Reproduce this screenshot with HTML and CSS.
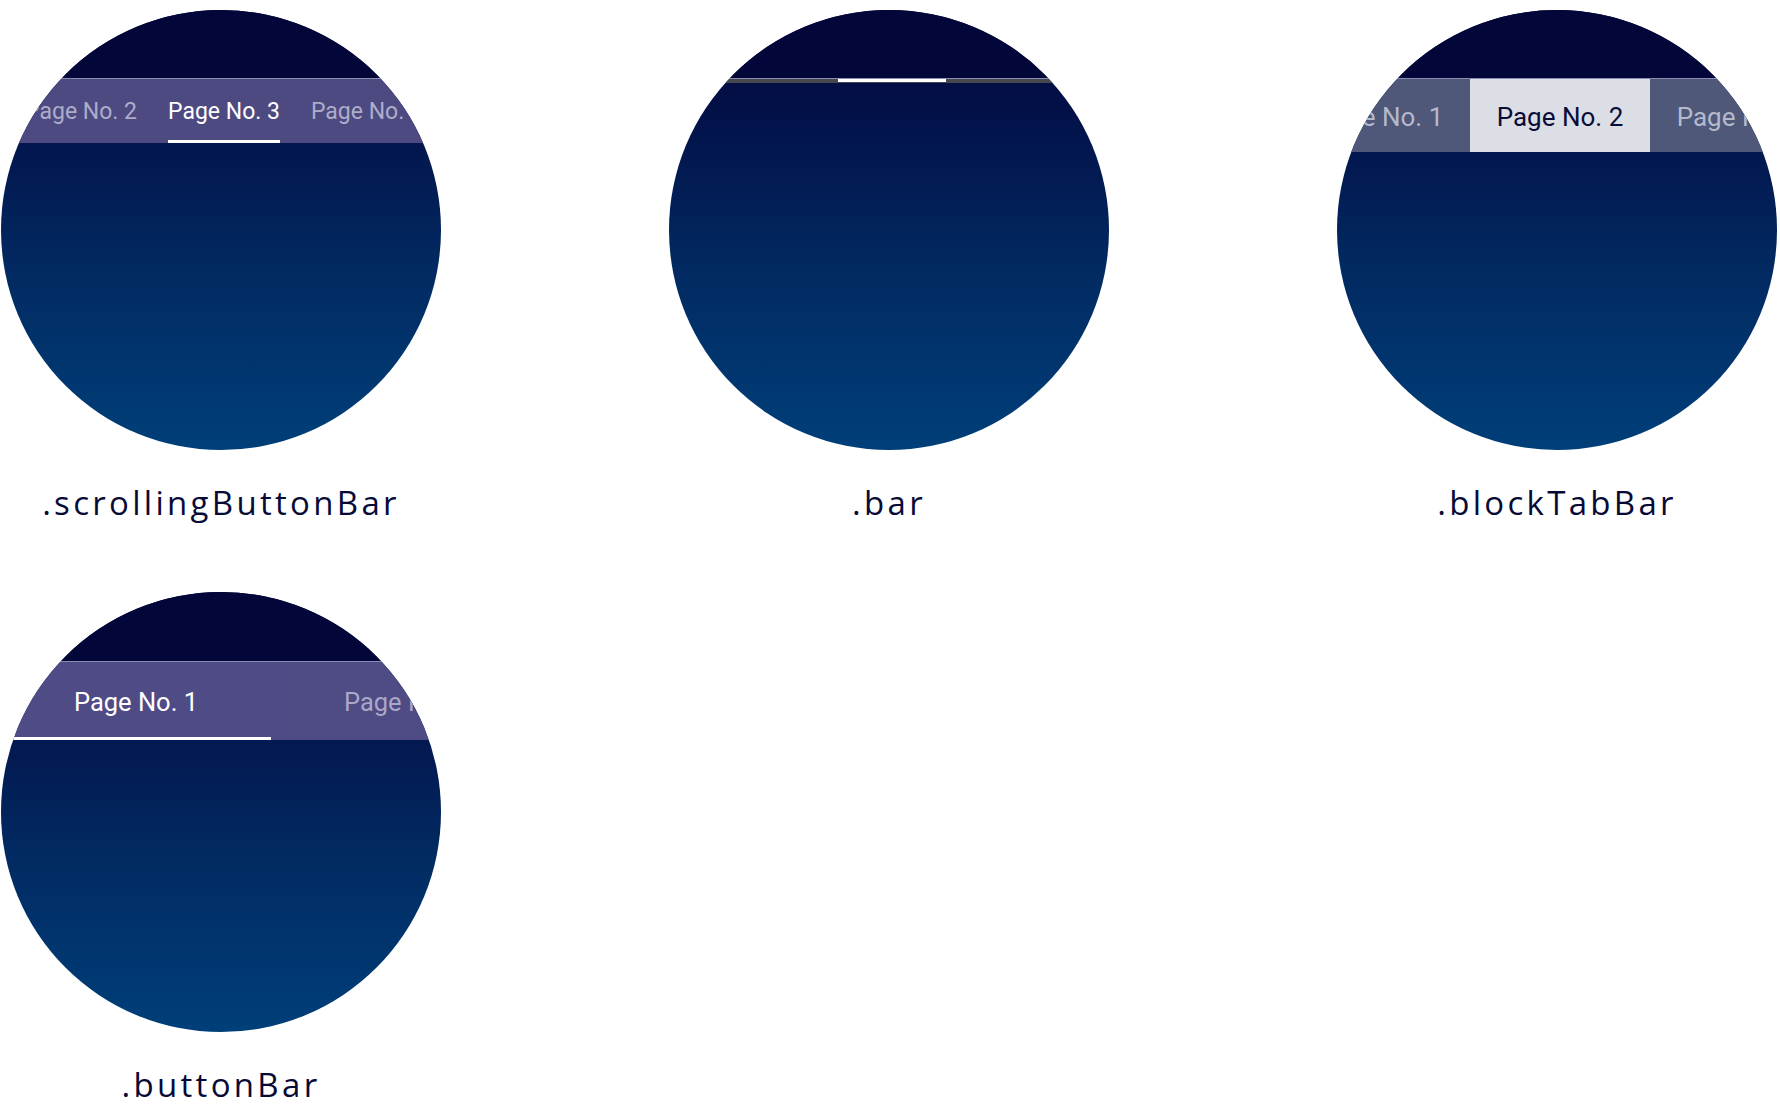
FILE: index.html
```html
<!DOCTYPE html>
<html>
<head>
<meta charset="utf-8">
<link rel="stylesheet" href="styles.css">
</head>
<body>
<div class="grid">
  <div class="cell">
    <div class="circle">
      <div class="nav"></div>
      <div class="sep"></div>
      <div class="scroll-bar">
        <span class="sitem">Page No. 1</span>
        <span class="sitem">Page No. 2</span>
        <span class="sitem active">Page No. 3</span>
        <span class="sitem">Page No. 4</span>
        <span class="sitem">Page No. 5</span>
      </div>
    </div>
    <div class="label">.scrollingButtonBar</div>
  </div>

  <div class="cell">
    <div class="circle">
      <div class="nav"></div>
      <div class="sep"></div>
      <div class="track"><div class="indicator"></div></div>
    </div>
    <div class="label">.bar</div>
  </div>

  <div class="cell">
    <div class="circle">
      <div class="nav"></div>
      <div class="sep"></div>
      <div class="block-bar">
        <span class="bitem">Page No. 0</span>
        <span class="bitem">Page No. 1</span>
        <span class="bitem active">Page No. 2</span>
        <span class="bitem">Page No. 3</span>
        <span class="bitem">Page No. 4</span>
      </div>
    </div>
    <div class="label">.blockTabBar</div>
  </div>

  <div class="cell">
    <div class="circle">
      <div class="nav nav-tall"></div>
      <div class="sep"></div>
      <div class="button-bar">
        <span class="btn active">Page No. 1</span>
        <span class="btn">Page No. 2</span>
      </div>
    </div>
    <div class="label">.buttonBar</div>
  </div>
</div>
</body>
</html>
```

FILE: styles.css
```css
html, body {
  margin: 0;
  padding: 0;
  background: #ffffff;
}
body {
  padding: 10px 0 0 1px;
}
.grid {
  display: grid;
  grid-template-columns: 440px 440px 440px;
  column-gap: 228px;
  row-gap: 68px;
}
.cell {
  display: flex;
  flex-direction: column;
  align-items: center;
}
.circle {
  width: 440px;
  height: 440px;
  border-radius: 50%;
  overflow: hidden;
  background: linear-gradient(to bottom, #020538 0%, #03124a 25%, #022a62 60%, #003f79 100%);
  display: flex;
  flex-direction: column;
}
.nav {
  height: 68px;
  flex: none;
  background: #020638;
}
.nav-tall {
  height: 69px;
}
.sep {
  height: 1px;
  flex: none;
  background: #8a8db3;
}
.scroll-bar {
  height: 64px;
  flex: none;
  background: #4d4a82;
  display: flex;
  justify-content: center;
  gap: 31px;
  font-family: Roboto, "Liberation Sans", sans-serif;
  font-size: 23px;
  white-space: nowrap;
  padding-left: 6px;
}
.sitem {
  color: rgba(200, 200, 222, 0.8);
  line-height: 61px;
  padding-top: 2px;
  height: 59px;
  border-bottom: 3px solid transparent;
}
.sitem.active {
  color: #ffffff;
  border-bottom-color: #ffffff;
}
.track {
  height: 4px;
  flex: none;
  background: #46474f;
  display: flex;
  justify-content: center;
}
.indicator {
  width: 108px;
  height: 3px;
  margin-left: 6px;
  background: #ffffff;
}
.block-bar {
  height: 73px;
  flex: none;
  background: #4f5878;
  display: flex;
  justify-content: center;
  font-family: Roboto, "Liberation Sans", sans-serif;
  font-size: 26px;
  white-space: nowrap;
  padding-left: 6px;
}
.bitem {
  flex: none;
  width: 180px;
  text-align: center;
  line-height: 73px;
  padding-top: 2px;
  height: 71px;
  color: rgba(200, 204, 222, 0.85);
}
.bitem.active {
  background: #dcdee6;
  color: #0a0c38;
}
.button-bar {
  height: 78px;
  flex: none;
  background: linear-gradient(to right, #4f4b86, #4e4b85);
  display: flex;
  font-family: Roboto, "Liberation Sans", sans-serif;
  font-size: 25.5px;
  white-space: nowrap;
}
.btn {
  flex: none;
  width: 270px;
  text-align: center;
  line-height: 75px;
  padding-top: 3px;
  height: 72px;
  color: rgba(200, 200, 222, 0.75);
  border-bottom: 3px solid transparent;
}
.btn.active {
  color: #ffffff;
  border-bottom-color: #ffffff;
}
.label {
  margin-top: 32px;
  height: 42px;
  line-height: 42px;
  font-family: "Open Sans", Lato, sans-serif;
  font-size: 33px;
  color: #080a36;
  letter-spacing: 3.3px;
}
```
